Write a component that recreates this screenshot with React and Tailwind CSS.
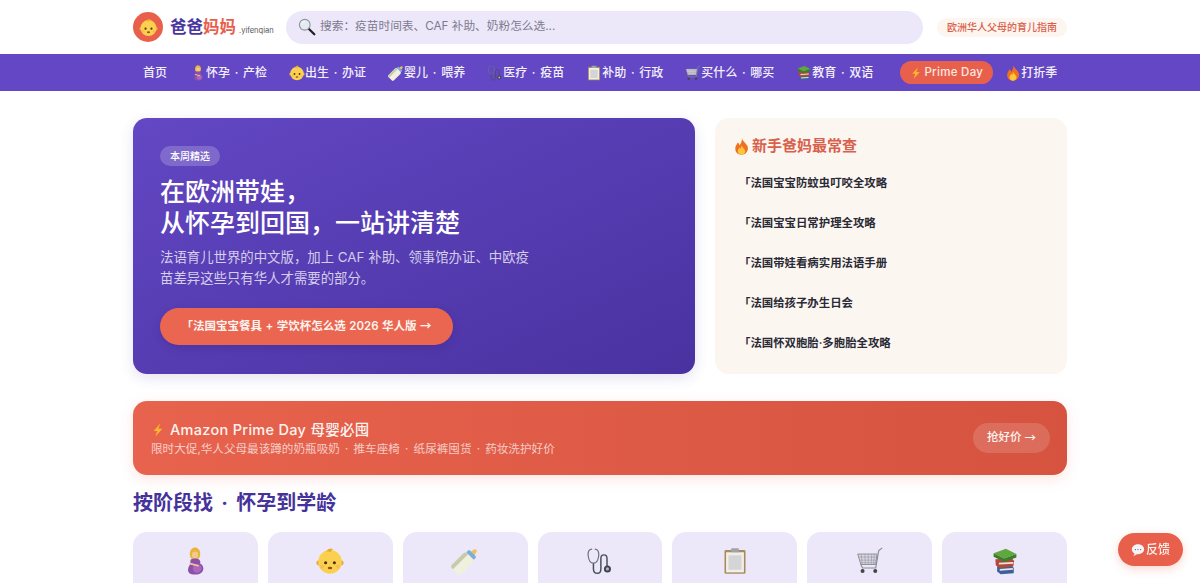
const font = { fontFamily: '"Inter", "Noto Sans CJK SC", sans-serif' };

const Baby = ({ className }) => (
  <svg viewBox="0 0 32 32" className={className}>
    <circle cx="3.500" cy="18" r="3" fill="#e9a93a" />
    <circle cx="28.500" cy="18" r="3" fill="#e9a93a" />
    <circle cx="16" cy="17" r="13.500" fill="#fbd04f" />
    <path d="M12 5c1-3 5-4.500 8-2.500-2 0-3 1.500-3 3.500-2-1-3-1-5-1z" fill="#eba82f" />
    <circle cx="11" cy="18" r="1.800" fill="#4a3216" />
    <circle cx="21" cy="18" r="1.800" fill="#4a3216" />
    <ellipse cx="16" cy="24" rx="2.600" ry="1.500" fill="#8f4f22" />
    <circle cx="7" cy="22.500" r="2.200" fill="#f7b25a" opacity=".6" />
    <circle cx="25" cy="22.500" r="2.200" fill="#f7b25a" opacity=".6" />
  </svg>
);

const Pregnant = ({ className }) => (
  <svg viewBox="0 0 32 32" className={className}>
    <path d="M10 8c0-5 3-7.500 6-7.500s6 2.500 6 7.500c0 2.500-1 5-2.500 5.500h-7C11 13 10 10.500 10 8z" fill="#e8b43c" />
    <ellipse cx="16" cy="9" rx="3.500" ry="3.800" fill="#f4c98d" />
    <path d="M11 14.500c2-2 8-2 10 0 1.500 2 1 3 1 4.500 2.500 1 3.500 3 3.500 5.500 0 4.500-4 7-9 7-5 .3-8.500-1.500-8.500-5.500 0-3 2-5 2.500-6.500.3-1.500 0-3 .5-5z" fill="#8d4fa8" />
    <ellipse cx="18.500" cy="24.500" rx="5" ry="5" fill="#a768bd" />
    <path d="M10.500 19l9 2.500" stroke="#f4c98d" strokeWidth="1.800" strokeLinecap="round" />
  </svg>
);

const Bottle = ({ className }) => (
  <svg viewBox="0 0 32 32" className={className}>
    <g transform="rotate(45 16 16)">
      <path d="M14 -1c1-1.500 3-1.500 4 0l1 5h-6z" fill="#efc353" />
      <rect x="10" y="3.500" width="12" height="5" rx="1.500" fill="#79aede" />
      <path d="M8.500 11c0-2 1.500-3 3-3h9c1.500 0 3 1 3 3v19c0 1.500-1 2.500-2.500 2.500h-10c-1.500 0-2.500-1-2.500-2.500z" fill="#f0f0dc" />
      <path d="M8.500 11c0-2 1.500-3 3-3h1.500v24.500h-2c-1.500 0-2.500-1-2.500-2.500z" fill="#c9c9ae" />
    </g>
  </svg>
);

const Stethoscope = ({ className }) => (
  <svg viewBox="0 0 32 32" className={className} fill="none">
    <path d="M6.500 2.500C3 3 2 6 2.500 10c.5 4.500 2.500 8.500 6 8.500s5.500-4 6-8.500c.4-4-.5-7-4-7.500" stroke="#6f7480" strokeWidth="1.400" strokeLinecap="round" />
    <path d="M8.500 18.500V25c0 3 2 5 4.500 5s4-2 4-5V13c0-2.500 1.500-4 3.500-4s3.500 1.500 3.500 4v9" stroke="#4a4f5c" strokeWidth="1.700" />
    <circle cx="24.500" cy="25" r="4" fill="#3d4250" />
    <circle cx="24.500" cy="25" r="1.800" fill="#b4b8c0" />
  </svg>
);

const Clipboard = ({ className }) => (
  <svg viewBox="0 0 32 32" className={className}>
    <rect x="4" y="3.500" width="24" height="27" rx="1.500" fill="#a98a5e" />
    <rect x="5.800" y="6" width="20.400" height="23" fill="#f0efe8" />
    <rect x="8.500" y="9.500" width="15" height="16.500" fill="#d4d5d6" />
    <rect x="11.500" y="1.500" width="9" height="4.500" rx="1" fill="#a0a3a8" />
  </svg>
);

const Cart = ({ className }) => (
  <svg viewBox="0 0 32 32" className={className} fill="none">
    <path d="M2 8h22l-1.500 12H5.500z" fill="#d9d7e2" stroke="#7b7d8a" strokeWidth=".9" />
    <path d="M6 8l1 12M10 8l.7 12M14 8v12M18 8l-.7 12M21 8l-1 12M3 11.500h20.500M4 15h19M4.500 18h18" stroke="#8a8b97" strokeWidth=".6" />
    <path d="M30 1l-4 3-3.500 20H7" stroke="#868995" strokeWidth="1.300" />
    <path d="M5.500 20l2 4" stroke="#868995" strokeWidth="1.200" />
    <circle cx="7.500" cy="27.500" r="2.300" fill="#444" />
    <circle cx="22" cy="27.500" r="2.300" fill="#444" />
  </svg>
);

const Books = ({ className }) => (
  <svg viewBox="0 0 32 32" className={className}>
    <path d="M7 22l17-1 2 3v6l-15 1-4-3z" fill="#3f5f9a" />
    <path d="M10 25l15-1v2l-15 1z" fill="#e9e6da" />
    <path d="M5 14l19-1 2.500 3-1 6-15 2-5-3z" fill="#b5473c" />
    <path d="M9 18l16.500-1v2l-16.500 1z" fill="#e9e6da" />
    <path d="M3 7l14-5 12 6-14 5z" fill="#5fa83d" />
    <path d="M3 7l12 6 14-5v4l-14 5-12-6z" fill="#3d7d2a" />
  </svg>
);

const Fire = ({ className }) => (
  <svg viewBox="0 0 32 32" className={className}>
    <path d="M17 .5c1 6 8 9 10.500 15.500 2.500 7.500-3 15.500-11.500 15.500S3.500 25 4.500 18c.5-4 3-6 4.500-9.500 2 1 3 3 3 5.500 3-3 5-8.500 5-13.500z" fill="#f0701f" />
    <path d="M16 13c1 5 7 7 7 12 0 3.500-3.500 6.500-7 6.500S9 28.500 9 25c0-3 2-4.500 3.500-7 1 0 1.500 1 1.500 2.500 1-2 2-4.500 2-7.500z" fill="#fcc63d" />
  </svg>
);

const Bolt = ({ className }) => (
  <svg viewBox="0 0 32 32" className={className}>
    <path d="M21 1L6 18h8l-4 13 16-18h-9z" fill="#f9b52c" />
  </svg>
);

const Loupe = ({ className }) => (
  <svg viewBox="0 0 32 32" className={className} fill="none">
    <path d="M19 19l10 10" stroke="#222" strokeWidth="4" strokeLinecap="round" />
    <circle cx="12" cy="12" r="9.500" fill="#e4eaf0" stroke="#8c95a0" strokeWidth="2" />
    <path d="M7 11c.5-2.500 2-4 4.500-4.500" stroke="#fff" strokeWidth="1.500" strokeLinecap="round" />
  </svg>
);

const Bubble = ({ className }) => (
  <svg viewBox="0 0 32 32" className={className}>
    <path d="M16 3C8 3 2 8 2 14.500c0 4 2.500 7.500 6 9.500 0 2-1 4-3 5 3 0 6-1.500 8-3.500 1 .2 2 .3 3 .3 8 0 14-5 14-11.300S24 3 16 3z" fill="#f5f5f7" />
    <circle cx="10" cy="15" r="1.500" fill="#666" />
    <circle cx="16" cy="15" r="1.500" fill="#666" />
    <circle cx="22" cy="15" r="1.500" fill="#666" />
  </svg>
);

const Arrow = () => <span className="font-['Noto_Sans_CJK_SC']">→</span>;

const navItems = [
  { Icon: Pregnant, text: "怀孕 · 产检" },
  { Icon: Baby, text: "出生 · 办证" },
  { Icon: Bottle, text: "婴儿 · 喂养" },
  { Icon: Stethoscope, text: "医疗 · 疫苗" },
  { Icon: Clipboard, text: "补助 · 行政" },
  { Icon: Cart, text: "买什么 · 哪买" },
  { Icon: Books, text: "教育 · 双语" },
];

const hotLinks = [
  "「法国宝宝防蚊虫叮咬全攻略",
  "「法国宝宝日常护理全攻略",
  "「法国带娃看病实用法语手册",
  "「法国给孩子办生日会",
  "「法国怀双胞胎·多胞胎全攻略",
];

const Header = () => (
  <header className="h-[54px] bg-white">
    <div className="mx-auto flex h-full w-[934px] items-center">
      <div className="flex h-[30px] w-[30px] shrink-0 items-center justify-center rounded-full bg-[#e8604c]">
        <Baby className="h-[19px] w-[19px]" />
      </div>
      <div className="ml-[7px] flex w-[106px] shrink-0 items-baseline whitespace-nowrap">
        <span className="text-[16.500px] font-bold text-[#4a36a0]">爸爸</span>
        <span className="text-[16.500px] font-bold text-[#e8604c]">妈妈</span>
        <span className="ml-[3px] text-[7.500px] text-[#555]">.yifenqian</span>
      </div>
      <div className="ml-[10px] flex h-[33px] w-[637px] shrink-0 items-center rounded-full bg-[#ece8f9] pl-[12px]">
        <Loupe className="h-[18px] w-[18px]" />
        <span className="ml-[4px] text-[11.700px] text-[#7d7a90]">搜索：疫苗时间表、CAF 补助、奶粉怎么选...</span>
      </div>
      <div className="ml-[14px] flex h-[19px] w-[130px] shrink-0 items-center justify-center rounded-full bg-[#fdf5ef] text-[10px] font-medium text-[#d9604c]">
        欧洲华人父母的育儿指南
      </div>
    </div>
  </header>
);

const Nav = () => (
  <nav className="h-[37px] bg-[#6347c4]">
    <div className="mx-auto flex h-full w-[934px] items-center text-[12px] font-medium text-[#f3f0fb]">
      <a className="ml-[10px] mr-[23px]">首页</a>
      {navItems.map(({ Icon, text }) => (
        <a key={text} className="mr-[22px] flex items-center whitespace-pre [word-spacing:1.500px]">
          <Icon className="h-[16px] w-[16px]" />
          {text}
        </a>
      ))}
      <a className="ml-[5px] flex h-[23px] w-[93px] shrink-0 items-center justify-center gap-[2px] rounded-full bg-[#e8604c] text-[11.500px] tracking-[0.3px] text-[#fde8e2]">
        <Bolt className="h-[12px] w-[12px]" />
        Prime Day
      </a>
      <a className="ml-[12px] flex items-center">
        <Fire className="h-[16px] w-[16px]" />
        打折季
      </a>
    </div>
  </nav>
);

const Hero = () => (
  <section className="flex gap-[20px]">
    <div className="flex h-[256px] w-[562px] flex-col items-start rounded-[14px] bg-gradient-to-br from-[#6347c4] to-[#4932a0] pl-[27px] pt-[28px] shadow-[0_4px_14px_rgba(74,50,160,0.14)]">
      <span className="flex h-[20px] w-[60px] items-center justify-center rounded-full bg-white/20 text-[10px] font-medium text-white">本周精选</span>
      <h1 className="mt-[11px] text-[25px] font-medium leading-[30.500px] text-white">
        在欧洲带娃，
        <br />
        从怀孕到回国，一站讲清楚
      </h1>
      <p className="mt-[9px] w-[372px] text-[13.400px] leading-[21px] text-white/75">
        法语育儿世界的中文版，加上 CAF 补助、领事馆办证、中欧疫苗差异这些只有华人才需要的部分。
      </p>
      <a className="mt-[19px] flex h-[37px] w-[293px] items-center justify-center rounded-full bg-[#ea6650] text-[11.500px] font-semibold text-[#fdf3ef] [word-spacing:0.600px] shadow-[0_3px_8px_rgba(40,20,100,0.18)]">
        <span className="whitespace-pre">「法国宝宝餐具 + 学饮杯怎么选 2026 华人版 <Arrow /></span>
      </a>
    </div>
    <aside className="h-[256px] w-[352px] rounded-[14px] bg-[#fcf6f1] pl-[18px] pt-[18px]">
      <h2 className="flex items-center gap-[2px] text-[15px] font-semibold leading-[20px] text-[#d9604c]">
        <Fire className="h-[17px] w-[17px]" />
        新手爸妈最常查
      </h2>
      <ul className="mt-[17px] flex flex-col gap-[20px] pl-[6px]">
        {hotLinks.map((link) => (
          <li key={link} className="text-[11.400px] font-semibold leading-[20px] text-[#2a2a35]">{link}</li>
        ))}
      </ul>
    </aside>
  </section>
);

const PrimeBanner = () => (
  <section className="mt-[27px] flex h-[74px] items-center justify-between rounded-[14px] bg-gradient-to-r from-[#e8634e] to-[#d5533f] pl-[18px] pr-[17px] shadow-[0_4px_14px_rgba(232,96,76,0.16)]">
    <div>
      <div className="flex items-center gap-[5px] text-[14.500px] font-medium leading-[20px] tracking-[0.3px] text-[#fdf3ef]">
        <Bolt className="h-[14px] w-[14px]" />
        Amazon Prime Day 母婴必囤
      </div>
      <div className="mt-[1px] whitespace-pre text-[11.600px] leading-[16px] text-white/70 [word-spacing:1.900px]">限时大促,华人父母最该蹲的奶瓶吸奶 · 推车座椅 · 纸尿裤囤货 · 药妆洗护好价</div>
    </div>
    <a className="flex h-[30px] w-[77px] items-center justify-center whitespace-pre rounded-full bg-white/15 text-[11.500px] font-medium text-[#fdf3ef]">抢好价 <Arrow /></a>
  </section>
);

const Stages = () => (
  <section className="mt-[14px]">
    <h2 className="text-[20px] font-bold leading-[28px] text-[#46329b] [word-spacing:3.500px]">按阶段找 · 怀孕到学龄</h2>
    <div className="mt-[15px] grid grid-cols-7 gap-[10px]">
      {navItems.map(({ Icon, text }) => (
        <div key={text} className="flex h-[100px] justify-center rounded-[14px] bg-[#ece8f9] pt-[15px]">
          <Icon className="h-[28px] w-[28px]" />
        </div>
      ))}
    </div>
  </section>
);

export default function App() {
  return (
    <div style={font} className="h-[583px] overflow-hidden bg-white">
      <Header />
      <Nav />
      <main className="mx-auto w-[934px] pt-[27px]">
        <Hero />
        <PrimeBanner />
        <Stages />
      </main>
      <button className="fixed bottom-[17px] right-[17px] flex h-[33px] w-[65px] items-center justify-center gap-px rounded-full bg-[#e8604c] text-[12px] font-medium text-[#fdf3ef] shadow-[0_3px_10px_rgba(232,96,76,0.25)]">
        <Bubble className="h-[14px] w-[14px]" />
        反馈
      </button>
    </div>
  );
}
